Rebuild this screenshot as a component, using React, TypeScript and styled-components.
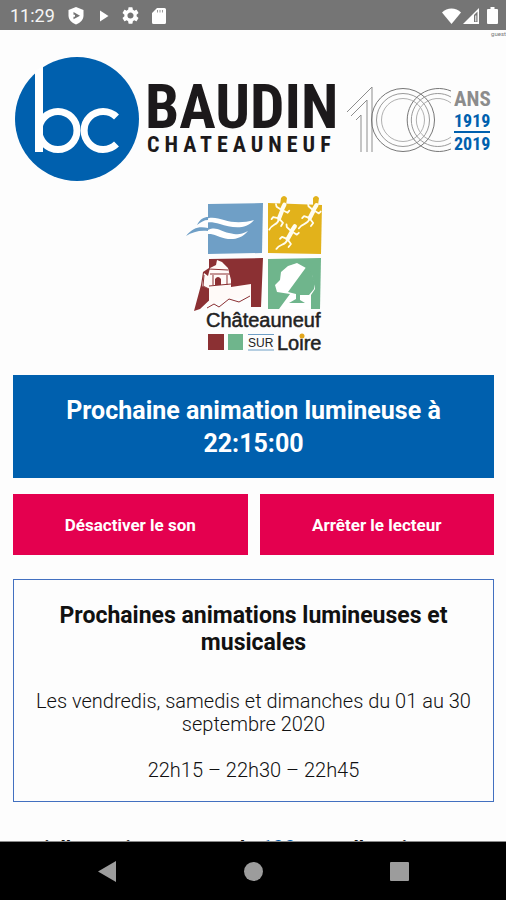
import React from "react";
import styled, { createGlobalStyle } from "styled-components";

const BLUE = "#0060ae";
const RED = "#e4004f";

const GlobalStyle = createGlobalStyle`
  *, *::before, *::after { box-sizing: border-box; }
  body {
    margin: 0;
    background: #fdfdfd;
    color: #111;
    font-family: Roboto, "Liberation Sans", sans-serif;
  }
`;

const Screen = styled.div`
  display: flex;
  flex-direction: column;
  height: 100vh;
`;

const StatusBar = styled.header`
  display: flex;
  flex: none;
  align-items: center;
  justify-content: space-between;
  height: 30px;
  padding: 1px 8px 0 10px;
  background: #757575;
  color: #f5f5f5;
  font-size: 18px;
`;

const StatusGroup = styled.div<{ $gap: number }>`
  display: flex;
  align-items: center;
  gap: ${(p) => p.$gap}px;
`;

const Page = styled.main`
  display: flex;
  flex: 1;
  flex-direction: column;
  min-height: 0;
  overflow: hidden;
  padding: 0 12px 0 13px;
  border-bottom: 1px solid #8a8a8a;
`;

const UserTag = styled.span`
  align-self: flex-end;
  height: 8px;
  margin-right: -12px;
  color: #777;
  font-size: 6px;
  line-height: 8px;
`;

const BrandLogo = styled.svg`
  display: block;
  flex: none;
  width: 100%;
  margin-top: 18px;
`;

const TownLogo = styled.svg`
  display: block;
  flex: none;
  align-self: center;
  width: 144px;
  height: 160px;
  margin-top: 12px;
`;

const NextShow = styled.h1`
  flex: none;
  margin: 21px 0 0;
  padding: 19px 24px 18px;
  background: ${BLUE};
  color: #fff;
  font-size: 25px;
  font-weight: 700;
  line-height: 33px;
  text-align: center;
`;

const Controls = styled.div`
  display: grid;
  flex: none;
  grid-template-columns: 1fr 1fr;
  gap: 12px;
  margin-top: 16px;
`;

const ControlButton = styled.button`
  height: 61px;
  padding: 0 8px;
  border: 0;
  background: ${RED};
  color: #fff;
  font: 700 17px/24px Roboto, "Liberation Sans", sans-serif;
  cursor: pointer;
`;

const Schedule = styled.section`
  flex: none;
  margin-top: 24px;
  padding: 22px 16px 19px;
  border: 1px solid #4270c0;
  text-align: center;
`;

const ScheduleTitle = styled.h2`
  margin: 0 0 34px;
  font-size: 23px;
  font-weight: 700;
  line-height: 27px;
`;

const ScheduleText = styled.p`
  margin: 0 0 23px;
  font-size: 20px;
  font-weight: 300;
  line-height: 23px;

  &:last-child { margin-bottom: 0; }
`;

const Story = styled.p`
  flex: none;
  margin: 34px 0 0;
  font-size: 20px;
  font-weight: 700;
  line-height: 24px;
  text-align: center;

  strong { color: ${BLUE}; }
`;

const NavBar = styled.nav`
  display: grid;
  flex: none;
  grid-template-columns: repeat(3, 146px);
  justify-content: center;
  height: 58px;
  background: #000;
`;

const NavButton = styled.button`
  display: flex;
  align-items: center;
  justify-content: center;
  padding: 0;
  border: 0;
  background: none;
  color: #9c9c9c;
  cursor: pointer;
`;

const ShieldIcon = () => (
  <svg width="16" height="18" viewBox="0 0 16 18" aria-hidden="true">
    <path fill="#fff" d="M8 0 15.500 3v5.500c0 4-3.200 7.600-7.500 9-4.300-1.400-7.500-5-7.500-9V3z" />
    <path fill="#757575" d="M5.500 5 12 8.700l-6.500 3.600z" />
    <path fill="#fff" d="M5 7.700h2v2H5z" />
  </svg>
);

const PlayIcon = () => (
  <svg width="12" height="12" viewBox="-2 0 12 12" aria-hidden="true">
    <path fill="#fff" d="M1 0.500 9.500 6 1 11.500z" />
  </svg>
);

const GearIcon = () => (
  <svg width="17" height="17" viewBox="2 2 20 20" aria-hidden="true">
    <path
      fill="#fff"
      d="M19.140 12.940c.040-.300.060-.610.060-.940 0-.320-.020-.640-.070-.940l2.030-1.580a.490.490 0 0 0 .120-.610l-1.920-3.320a.488.488 0 0 0-.590-.220l-2.390.960c-.500-.380-1.030-.700-1.620-.940l-.360-2.540a.484.484 0 0 0-.480-.410h-3.840c-.240 0-.430.170-.470.410l-.360 2.540c-.590.240-1.130.570-1.620.940l-2.390-.960c-.220-.080-.470 0-.590.220L2.740 8.870c-.120.210-.080.470.120.610l2.030 1.580c-.050.300-.090.630-.090.940s.020.640.070.940l-2.030 1.580a.490.490 0 0 0-.120.610l1.920 3.320c.120.220.370.290.590.220l2.390-.960c.500.380 1.030.700 1.620.940l.360 2.540c.050.240.240.410.480.410h3.840c.240 0 .440-.170.470-.410l.360-2.540c.590-.240 1.130-.560 1.620-.940l2.390.960c.220.080.470 0 .590-.220l1.920-3.320c.120-.220.070-.470-.120-.610l-2.010-1.580zM12 15.600A3.610 3.610 0 0 1 8.400 12c0-1.980 1.620-3.600 3.600-3.600s3.600 1.620 3.600 3.600-1.620 3.600-3.600 3.600z"
    />
  </svg>
);

const SdCardIcon = () => (
  <svg width="14" height="16" viewBox="0 0 14 16" aria-hidden="true">
    <path fill="#fff" d="M5 0h7.500A1.500 1.500 0 0 1 14 1.500v13a1.500 1.500 0 0 1-1.500 1.500h-11A1.500 1.500 0 0 1 0 14.500V5z" />
    <path stroke="#9a9a9a" strokeWidth="1" d="M5.500 2v2.500M8 2v2.500M10.500 2v2.500" />
  </svg>
);

const WifiIcon = () => (
  <svg width="19" height="16" viewBox="0 0 19 16" aria-hidden="true">
    <path fill="#fff" d="M0 4.500C5-1 14-1 19 4.500L9.500 16z" />
  </svg>
);

const SignalIcon = () => (
  <svg width="16" height="16" viewBox="0 0 16 16" aria-hidden="true">
    <path fill="#fff" d="M0 16 16 0v16z" />
    <path fill="#757575" d="M11 7 14.500 3.500V14H11z" />
    <path fill="#fff" d="M12.300 7.500h1v6h-1z" />
  </svg>
);

const BatteryIcon = () => (
  <svg width="11" height="17" viewBox="0 0 11 17" aria-hidden="true">
    <path fill="#fff" d="M3.500 0h4v2H10a1 1 0 0 1 1 1v13a1 1 0 0 1-1 1H1a1 1 0 0 1-1-1V3a1 1 0 0 1 1-1h2.500z" />
  </svg>
);

const Word = styled.text<{ $size: number; $spacing?: number }>`
  font-family: "Liberation Sans Narrow", "Roboto Condensed", Roboto, sans-serif;
  font-size: ${(p) => p.$size}px;
  font-weight: 700;
  letter-spacing: ${(p) => p.$spacing ?? 0}px;
`;

const TownWord = styled.text<{ $size: number; $stroke?: boolean }>`
  font-family: "Liberation Sans", Arial, sans-serif;
  font-size: ${(p) => p.$size}px;
  fill: #222;
  stroke: ${(p) => (p.$stroke ? "#222" : "none")};
  stroke-width: 0.5;
`;

const Brand = () => (
  <BrandLogo viewBox="13 56 481 126" role="img" aria-label="Baudin Chateauneuf, 100 ans, 1919-2019">
    <circle cx="77" cy="119" r="62" fill={BLUE} />
    <g fill="none" stroke="#fff" strokeWidth="7">
      <path d="M35 71 43 66V152H35z" fill="#fff" stroke="none" />
      <circle cx="58" cy="130.500" r="19" />
      <path d="M116.500 117A19 19 0 1 0 116.500 144" />
    </g>
    <g fill="#1c191b">
      <Word x="145" y="128" $size={61}>BAUDIN</Word>
      <Word x="147" y="152" $size={22} $spacing={5}>CHATEAUNEUF</Word>
    </g>
    <g fill="none" stroke="#777" strokeWidth="1">
      <path d="M347 112 372 87V152M351 116 367 100V152M356 120 361 115V152" stroke="#8d8d8d" />
      <circle cx="403" cy="120" r="31.500" />
      <circle cx="403" cy="120" r="26.500" stroke="#999" />
      <circle cx="403" cy="120" r="21.500" stroke="#b0b0b0" />
      <path d="M451 91A31.500 31.500 0 1 0 451 149" />
      <path d="M451 97A26.500 26.500 0 1 0 451 143" stroke="#999" />
      <path d="M451 103A21.500 21.500 0 1 0 451 137" stroke="#b0b0b0" />
    </g>
    <Word x="454" y="106" $size={21} fill="#8c8c8c">ANS</Word>
    <Word x="454" y="127" $size={18} fill={BLUE}>1919</Word>
    <rect x="454" y="131" width="36" height="2" fill={BLUE} />
    <Word x="454" y="150" $size={18} fill={BLUE}>2019</Word>
  </BrandLogo>
);

const Lizard = ({ at }: { at: string }) => (
  <g transform={at} fill="none" stroke="#fffdf0" strokeLinecap="round" strokeLinejoin="round">
    <path strokeWidth="3.500" d="M1-9 0-5M0-3-1 3" />
    <path strokeWidth="1.500" d="M-1 4C-1 9-6 9-7 14M0-4-5-6-6-8M1-4 5-3 6-5M-2 3-6 3-7 5M0 4 3 6 2 9" />
  </g>
);

const Town = () => (
  <TownLogo viewBox="182 194 144 160" role="img" aria-label="Châteauneuf sur Loire">
    <path fill="#6f9fc6" d="M208 204 263 203 262 253 208 254z" />
    <path fill="#fff" d="M197 226C205 215 215 217 224 220S244 223 254 220C245 231 230 227 220 224S204 222 197 226z" />
    <path fill="#fff" d="M208 230C216 226 220 231 229 233S240 235 248 231C240 241 228 240 220 237S213 234 208 234z" />
    <path fill="#6f9fc6" d="M197 225C200 219 204 217 208 217V220C204 220 201 222 197 225zM186 236C193 227 200 226 208 228V231C200 230 192 232 186 236z" />
    <path fill="#e2b21b" d="M268 203 322 205 321 254 268 253z" />
    <path fill="#e2b21b" d="M280 205 281 198Q284 194 287 198L286 205zM313 205 313 198Q316 194 319 198L318 205z" />
    <Lizard at="translate(281 215) rotate(12) scale(1.2)" />
    <Lizard at="translate(290 236) rotate(20) scale(1.2)" />
    <Lizard at="translate(312 215) rotate(18) scale(1.2)" />
    <path fill="#8b3033" d="M209 259 263 258 261 307H251V285L216 294 200 309 194 311 201 285 203 272 209 268z" />
    <path fill="#fffaf8" d="M208 276 210 268 216 265 217 260 222 262 228 268 231 280V287L251 284V296L217 302 209 306V289L202 286 204 273z" />
    <path fill="none" stroke="#8b3033" strokeWidth="1" d="M209 269 228 270M210 274H230M209 286 231 284M213 275V285M227 275V285M204 275 203 286 209 289M207 308 214 304 219 307 229 299 239 302 250 296" />
    <path fill="#8b3033" d="M215 285V279Q218 275 221 279V285z" />
    <path fill="#6fb58c" d="M268 259 321 258 320 309H268z" />
    <path fill="#fff" d="M277 292 275 285 280 280 281 272 288 266 297 263 306 268 312 275 315 289 311 295V309H279L290 294z" />
    <path fill="#6fb58c" d="M307 266 312 274 314 281 314 289 309 295 300 295 300 300 305 303H289L296 299V294L288 292z" />
    <TownWord x="206" y="327" $size={20} $stroke>Châteauneuf</TownWord>
    <rect x="208" y="334" width="16" height="16" fill="#8b3033" />
    <rect x="228" y="334" width="15" height="16" fill="#6fb58c" />
    <path stroke="#6f9fc6" strokeWidth="1" d="M248 334.500H274M248 350H274" />
    <TownWord x="248" y="347" $size={12}>SUR</TownWord>
    <TownWord x="277" y="350" $size={20} $stroke>Loire</TownWord>
    <circle cx="302" cy="336" r="2.500" fill="#e2a51b" />
  </TownLogo>
);

export default function App() {
  return (
    <>
      <GlobalStyle />
      <Screen>
        <StatusBar>
          <StatusGroup $gap={13}>
            <time>11:29</time>
            <ShieldIcon />
            <PlayIcon />
            <GearIcon />
            <SdCardIcon />
          </StatusGroup>
          <StatusGroup $gap={2}>
            <WifiIcon />
            <StatusGroup $gap={8}>
              <SignalIcon />
              <BatteryIcon />
            </StatusGroup>
          </StatusGroup>
        </StatusBar>
        <Page>
          <UserTag>guest</UserTag>
          <Brand />
          <Town />
          <NextShow>Prochaine animation lumineuse à 22:15:00</NextShow>
          <Controls>
            <ControlButton type="button">Désactiver le son</ControlButton>
            <ControlButton type="button">Arrêter le lecteur</ControlButton>
          </Controls>
          <Schedule>
            <ScheduleTitle>Prochaines animations lumineuses et musicales</ScheduleTitle>
            <ScheduleText>Les vendredis, samedis et dimanches du 01 au 30 septembre 2020</ScheduleText>
            <ScheduleText>22h15 – 22h30 – 22h45</ScheduleText>
          </Schedule>
          <Story>
            vielle musique au son de <strong>100</strong> ans, elle anime nos
          </Story>
        </Page>
        <NavBar aria-label="Navigation">
          <NavButton type="button" aria-label="Retour">
            <svg width="18" height="21" viewBox="0 0 18 21" aria-hidden="true">
              <path fill="currentColor" d="M0 10.500 18 0v21z" />
            </svg>
          </NavButton>
          <NavButton type="button" aria-label="Accueil">
            <svg width="19" height="19" viewBox="0 0 19 19" aria-hidden="true">
              <circle cx="9.500" cy="9.500" r="9.500" fill="currentColor" />
            </svg>
          </NavButton>
          <NavButton type="button" aria-label="Applications récentes">
            <svg width="19" height="19" viewBox="0 0 19 19" aria-hidden="true">
              <rect width="19" height="19" rx="1" fill="currentColor" />
            </svg>
          </NavButton>
        </NavBar>
      </Screen>
    </>
  );
}
